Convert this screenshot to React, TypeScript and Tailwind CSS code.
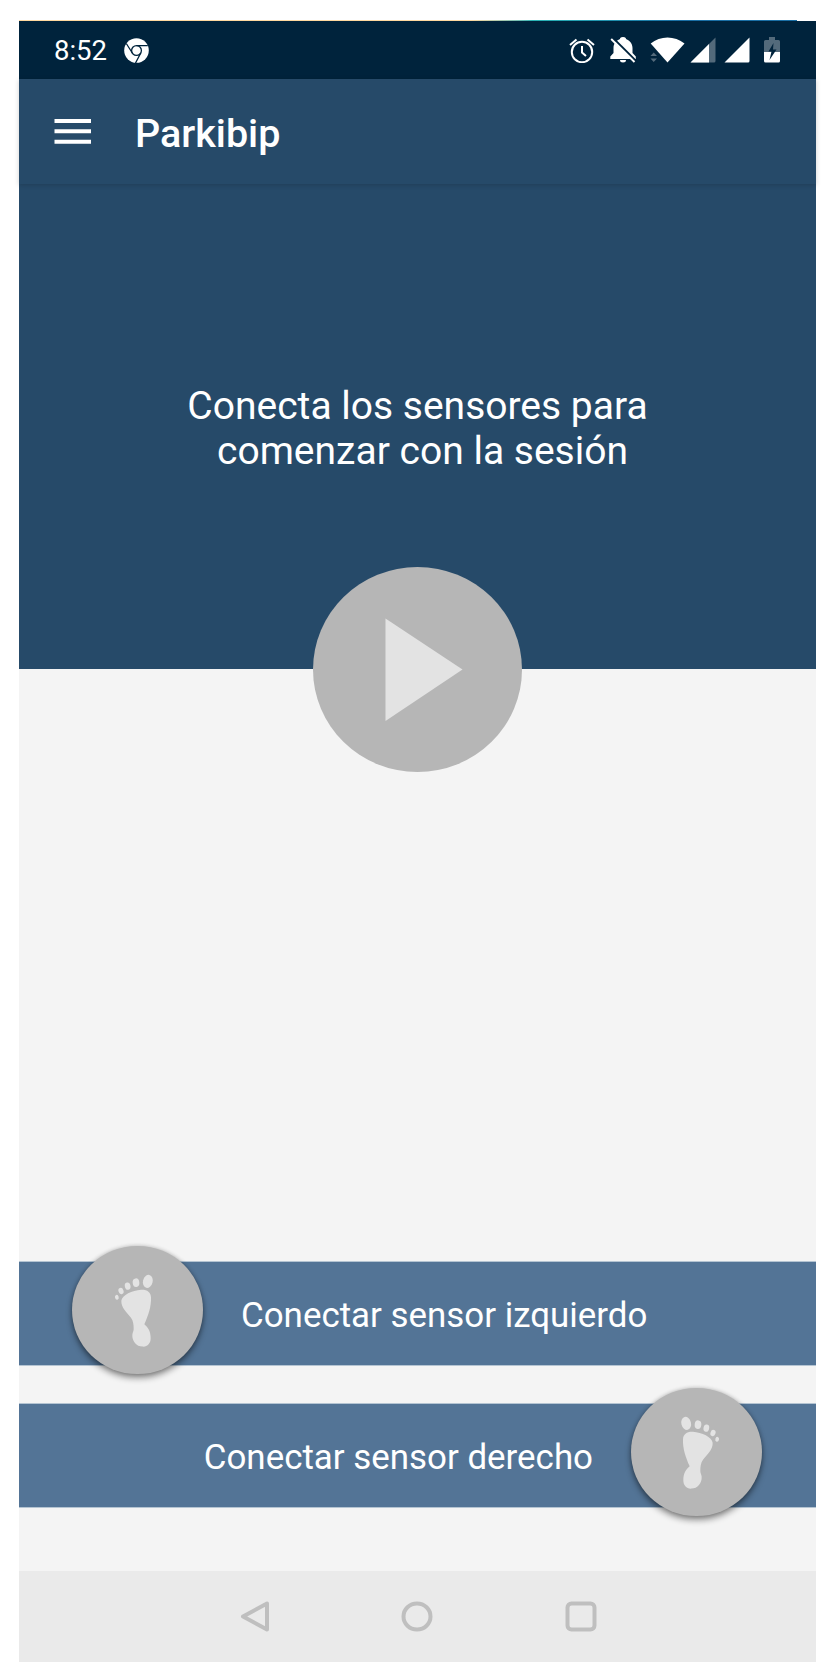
import type { ReactNode } from "react";

function Foot({ mirrored = false }: { mirrored?: boolean }) {
  return (
    <svg
      viewBox="217 45 393 387"
      preserveAspectRatio="none"
      className={mirrored ? "block h-full w-full -scale-x-100" : "block h-full w-full"}
      fill="#e3e3e3"
    >
      <ellipse cx="444.500" cy="151.500" rx="14.500" ry="20" transform="rotate(14 444.5 151.5)" />
      <ellipse cx="409" cy="155.500" rx="10" ry="13" transform="rotate(-6 409 155.500)" />
      <ellipse cx="384" cy="166" rx="8.500" ry="11" transform="rotate(-12 384 166)" />
      <ellipse cx="364" cy="180.500" rx="7.500" ry="9.500" transform="rotate(-20 364 180.500)" />
      <ellipse cx="351.500" cy="199.500" rx="5.500" ry="7.500" transform="rotate(-14 351.500 199.500)" />
      <path d="M424 177C442 176 453 184 454 199C455 229 446 252 434 281C445 290 453 302 453 323C453 339 443 349 429 348C410 347 397 332 398 312C399 304 402 302 402 295C402 281 401 271 394 261C381 245 364 230 365 210C367 193 398 179 424 177Z" />
    </svg>
  );
}

function FootButton({ mirrored = false }: { mirrored?: boolean }) {
  return (
    <button
      className="mb-[7px] h-[128.500px] w-[131px] shrink-0 rounded-[50%] bg-[#b6b6b6] shadow-[0_4px_6px_rgba(0,0,0,0.42),0_0_4px_rgba(0,0,0,0.2)]"
    >
      <Foot mirrored={mirrored} />
    </button>
  );
}

function SensorBar({ className, children }: { className: string; children: ReactNode }) {
  return (
    <div className={`flex h-[105px] items-center border-y border-[#b4c4d2] bg-[#537496] text-[34.900px] leading-none whitespace-nowrap text-white ${className}`}>
      {children}
    </div>
  );
}

function StatusBar() {
  return (
    <div className="flex h-[58px] shrink-0 items-start bg-[#00233c] pt-[16px] pl-[35px]">
      <span className="w-[70px] text-[27.500px] leading-[27px] text-white">8:52</span>
      <svg width="25" height="25" viewBox="0 0 25 25" className="mt-[0.5px]">
        <circle cx="12.500" cy="12.500" r="12.300" fill="#fff" />
        <g fill="none" stroke="#00233c" strokeWidth="1.300">
          <circle cx="12.500" cy="12.500" r="4.900" />
          <path d="M12.500 7.600H23.800M8.300 15L2.300 5.500M16.800 15L11.500 25" />
        </g>
      </svg>
      <div className="ml-[420px] flex items-start">
        <svg width="26" height="26" viewBox="0 0 26 26" fill="none" stroke="#fff" strokeWidth="2">
          <circle cx="13" cy="15" r="10.200" />
          <path d="M1 8L7.500 2.500M18.500 2.500L25 8M13 9V15.500L17 19" />
        </svg>
        <svg width="26" height="26" viewBox="0 0 26 26" className="ml-[15px]">
          <path fill="#fff" d="M10 23H16A3 2.500 0 0 1 10 23ZM13 0C15.500 0 16 1 16 2C20 3.500 22.500 7 22.500 11V16L25.800 19.500V22H.300V19.500L3.500 16V11C3.500 7 6 3.500 10 2C10 1 10.500 0 13 0Z" />
          <path d="M3 1L27 25" stroke="#00233c" strokeWidth="2" />
          <path d="M1.200 2L24.500 25" stroke="#fff" strokeWidth="1.900" />
        </svg>
        <svg width="35" height="26" viewBox="0 0 35 26" className="ml-[14px]">
          <path d="M17.500 25.500L.700 6.500C10-1.500 25-1.500 34.500 6.500Z" fill="#fff" />
          <path d="M.500 19L3.700 15.500L7 19ZM.500 21.500H7L3.700 25Z" fill="#536a7b" />
        </svg>
        <svg width="26" height="26" viewBox="0 0 26 26" className="ml-[5px]">
          <path d="M25.500 .500V24Q25.500 25.500 24 25.500H.500Z" fill="#536a7b" />
          <path d="M19 7V25.500H.500Z" fill="#fff" />
        </svg>
        <svg width="26" height="26" viewBox="0 0 26 26" className="ml-[8px]">
          <path d="M25.500 .500V24Q25.500 25.500 24 25.500H.500Z" fill="#fff" />
        </svg>
        <svg width="16" height="26" viewBox="0 0 16 26" className="ml-[14px]">
          <path d="M5 0H11V3H14.500Q16 3 16 4.500V15H0V4.500Q0 3 1.500 3H5Z" fill="#536a7b" />
          <path d="M0 15H16V24Q16 25.500 14.500 25.500H1.500Q0 25.500 0 24Z" fill="#fff" />
          <path d="M9.500 6L4.500 14.500H7.500L5.500 23L12.500 12.500H9Z" fill="#00233c" />
        </svg>
      </div>
    </div>
  );
}

export default function App() {
  return (
    <div className="h-[1673px] w-[828px] bg-white pt-[20px] pl-[19px] font-['Roboto',sans-serif]">
      <div className="flex h-[1642px] w-[797px] flex-col bg-[#f4f4f4]">
        <div className="flex h-px shrink-0 bg-white">
          <div className="h-px w-[778px] bg-linear-to-r from-[#ffd9a0] from-58% via-[#2bb5b5] via-66% to-[#1a6fa5] to-85%" />
        </div>
        <StatusBar />
        <header className="z-10 flex h-[105px] shrink-0 items-center bg-[#264a69] pl-[35px] shadow-[0_1px_5px_rgba(0,0,0,0.18)]">
          <svg width="37" height="26" viewBox="0 0 37 26" fill="#fff">
            <path d="M.5 0H37V4H.5ZM.5 10.300H37V14.300H.5ZM.5 20.800H37V24.800H.5Z" />
          </svg>
          <h1 className="mt-[4px] ml-[44px] text-[39.500px] leading-none font-medium text-white">Parkibip</h1>
        </header>
        <section className="flex h-[485px] shrink-0 flex-col items-center bg-[#264a69] pt-[200px] text-[39px] leading-[45px] whitespace-pre text-white">
          <p>Conecta los sensores para</p>
          <p className="pl-[10px]">comenzar con la sesión</p>
          <button className="mt-[93px] block h-[205px] w-[209px] shrink-0">
            <svg width="209" height="205" viewBox="0 0 209 205">
              <ellipse cx="104.500" cy="102.500" rx="104.500" ry="102.500" fill="#b6b6b6" />
              <path d="M72.500 51.500L149.500 102.500L72.500 154Z" fill="#e3e3e3" />
            </svg>
          </button>
        </section>
        <main className="mt-[592px] flex flex-col gap-[37px]">
          <SensorBar className="pl-[53px]">
            <FootButton />
            <span className="mt-[5px] ml-[38px]">Conectar sensor izquierdo</span>
          </SensorBar>
          <SensorBar className="justify-end pr-[54px]">
            <span className="mt-[5px] mr-[38px]">Conectar sensor derecho</span>
            <FootButton mirrored />
          </SensorBar>
        </main>
        <nav className="mt-auto flex h-[91px] shrink-0 items-start bg-[#eaeaea] pt-[30px] pl-[221px]">
          <svg width="30" height="31" viewBox="0 0 30 31" fill="none" stroke="#bfbfbf" strokeWidth="4" strokeLinejoin="round">
            <path d="M27 2.500V28.500L3 15.500Z" />
          </svg>
          <svg width="32" height="31" viewBox="0 0 32 31" className="ml-[131px]" fill="none" stroke="#bfbfbf" strokeWidth="4">
            <ellipse cx="16" cy="15.500" rx="13.500" ry="13" />
          </svg>
          <svg width="32" height="31" viewBox="0 0 32 31" className="ml-[132px]" fill="none" stroke="#bfbfbf" strokeWidth="4">
            <rect x="2.500" y="2.500" width="27" height="26" rx="4" />
          </svg>
        </nav>
      </div>
    </div>
  );
}
